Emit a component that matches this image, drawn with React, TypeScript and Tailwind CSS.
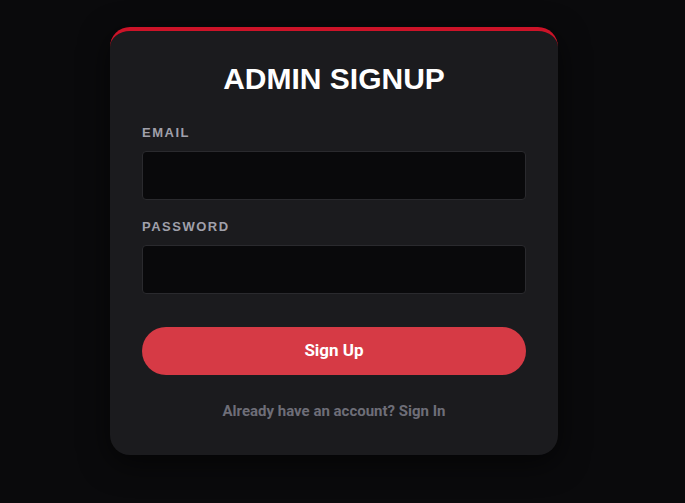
export default function App() {
  return (
    <div className="min-h-screen bg-[#0a0a0c] flex justify-center items-start pt-[27px] pr-[17px]">
      <div className="w-[448px] bg-[#1b1b1e] border-t-4 border-[#cc1328] rounded-[20px] px-8 pt-[30px] pb-[34px] shadow-[0_8px_30px_rgba(0,0,0,0.6)]">
        <h1 className="text-center text-white text-[30px] leading-[36px] font-bold font-['Liberation_Sans',Arial,sans-serif] mb-[26px]">
          ADMIN SIGNUP
        </h1>
        <div className="mb-[17px]">
          <label className="block text-[13px] leading-[20px] font-bold tracking-[1.5px] text-[#a0a0ab] font-['Liberation_Sans',Arial,sans-serif] mb-[8px]">
            EMAIL
          </label>
          <input
            type="email"
            className="block w-full h-[49px] bg-[#09090b] border border-[#2a2a2e] rounded-[4px] px-3 text-white outline-none"
          />
        </div>
        <div className="mb-[33px]">
          <label className="block text-[13px] leading-[20px] font-bold tracking-[1.5px] text-[#a0a0ab] font-['Liberation_Sans',Arial,sans-serif] mb-[8px]">
            PASSWORD
          </label>
          <input
            type="password"
            className="block w-full h-[49px] bg-[#09090b] border border-[#2a2a2e] rounded-[4px] px-3 text-white outline-none"
          />
        </div>
        <button className="block w-full h-[48px] rounded-full bg-[#d63a45] text-white text-[17px] font-bold font-['Roboto',sans-serif]">
          Sign Up
        </button>
        <p className="mt-[26px] text-center text-[15px] leading-[20px] font-bold text-[#6e6e78] font-['Roboto',sans-serif]">
          Already have an account? Sign In
        </p>
      </div>
    </div>
  );
}
